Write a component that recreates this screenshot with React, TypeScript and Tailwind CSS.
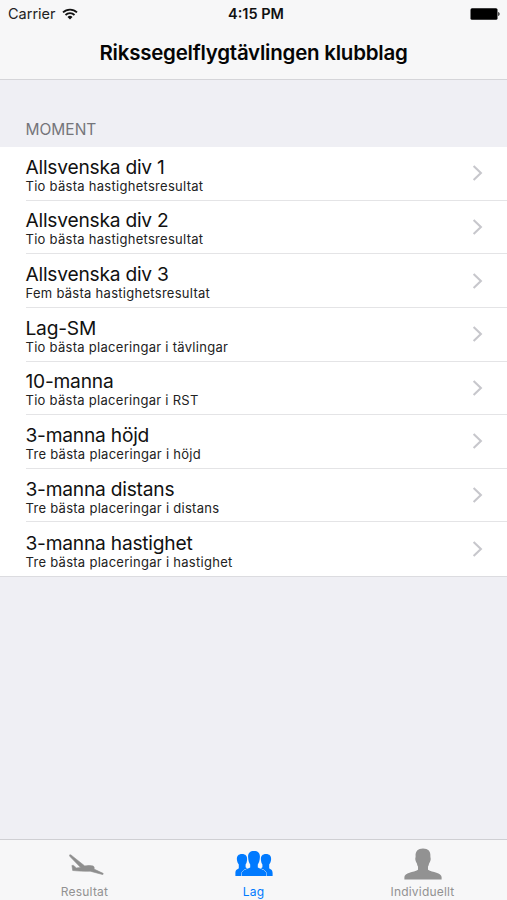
const moments = [
  { title: 'Allsvenska div 1', detail: 'Tio bästa hastighetsresultat' },
  { title: 'Allsvenska div 2', detail: 'Tio bästa hastighetsresultat' },
  { title: 'Allsvenska div 3', detail: 'Fem bästa hastighetsresultat' },
  { title: 'Lag-SM', detail: 'Tio bästa placeringar i tävlingar' },
  { title: '10-manna', detail: 'Tio bästa placeringar i RST' },
  { title: '3-manna höjd', detail: 'Tre bästa placeringar i höjd' },
  { title: '3-manna distans', detail: 'Tre bästa placeringar i distans' },
  { title: '3-manna hastighet', detail: 'Tre bästa placeringar i hastighet' },
];

const WifiIcon = () => (
  <svg width="16" height="12" viewBox="0 0 16 12" fill="none" stroke="#111" strokeWidth="1.8">
    <path d="M1 4.4a10 10 0 0 1 14 0M3.5 7a6.4 6.4 0 0 1 9 0" />
    <path d="M8 11.4 5.5 8.9a3.6 3.6 0 0 1 5 0z" fill="#111" stroke="none" />
  </svg>
)

const BatteryIcon = () => (
  <svg width="31" height="12" viewBox="0 0 31 12" fill="#000">
    <rect x="0.5" y="0.3" width="27" height="11.4" rx="1.5" />
    <path d="M28.3 4c1.6.3 1.6 3.7 0 4z" />
  </svg>
)

const Chevron = () => (
  <svg width="11" height="18" viewBox="0 0 11 18" fill="none" stroke="#c7c7cc" strokeWidth="2.1">
    <path d="M1.6 1.9 8.9 9l-7.3 7.1" />
  </svg>
)

const GliderIcon = () => (
  <svg width="38" height="32" viewBox="0 0 38 32" fill="#8e8e8e" stroke="#8e8e8e" strokeWidth="0.6" strokeLinejoin="round">
    <path d="M3.500 7c.8-.6 1.900.2 3 1.200L18.800 18c2.200-.6 6.300-.8 8.300 0 1.100.6 1.400 2 .9 3.100l9 4.200c.5.400.3 1.300-.5 1.200l-12.300-3.300c-5.300.3-11.500-.1-17.500-.7L5.900 17.400h1.600l2.900 2.500 4.200-.4L4 8.600z" />
  </svg>
)

const GroupIcon = () => (
  <svg width="38" height="32" viewBox="0 0 38 32" fill="#007aff">
    <path d="M7 6c3.600 0 5.400 2.100 5.100 5.600-.2 2.300-.6 3.800-1.500 5v2.600c1.400 1.200 4.400 1.500 4.400 4.200V28H.4v-2.900c0-3.500 2-3.400 3.400-4.800v-3.700c-.9-1.200-1.700-2.700-1.900-5C1.600 8.100 3.400 6 7 6z" />
    <path d="M31 6c-3.600 0-5.400 2.100-5.100 5.600.2 2.300.6 3.800 1.500 5v2.600c-1.400 1.200-4.400 1.500-4.400 4.200V28h14.600v-2.900c0-3.500-2-3.400-3.400-4.800v-3.700c.9-1.200 1.700-2.700 1.900-5C36.400 8.100 34.600 6 31 6z" />
    <path d="M19 3c4.200 0 6.200 2.300 5.900 6.300-.2 3.200-.9 5.500-2.100 7.200v3c2.900 1.800 7.900 2 8.500 6V28H6.700v-2.500c.6-4 5.600-4.200 8.500-6v-3c-1.200-1.700-1.900-4-2.100-7.200C12.800 5.300 14.800 3 19 3z" stroke="#f7f7f8" strokeWidth="0.9" paintOrder="stroke" />
  </svg>
)

const PersonIcon = () => (
  <svg width="38" height="33" viewBox="0 0 38 33" fill="#929292">
    <path d="M19 .5c5.300 0 7.700 3 7.400 7.800-.1 1.300.4 1.700.3 2.900-.2 1.900-.9 2.900-1.500 4-.4 1.600-.7 2.500-1.200 3.300v3.200c4.400 2.700 13.600 3 13.600 7.400v2.500H.4v-2.500c0-4.400 9.200-4.700 13.600-7.400v-3.200c-.5-.8-.8-1.700-1.200-3.300-.6-1.100-1.300-2.100-1.500-4-.1-1.200.4-1.600.3-2.900C11.300 3.500 13.700.5 19 .5z" />
  </svg>
)

const tabs = [
  { label: 'Resultat', icon: <GliderIcon />, color: 'text-[#929292]' },
  { label: 'Lag', icon: <GroupIcon />, color: 'text-[#007aff]' },
  { label: 'Individuellt', icon: <PersonIcon />, color: 'text-[#929292]' },
];

const Row = ({ title, detail }: { title: string; detail: string }) => (
  <li className="flex flex-1 pl-[25.5px] group">
    <div className="flex flex-1 items-center justify-between border-b border-[#e4e4e6] pr-[24px] group-last:border-0">
      <div className="pt-[2px]">
        <p className="text-[19.2px] leading-[24px] tracking-[-0.23px] text-[#111]">{title}</p>
        <p className="text-[13px] leading-[15px] tracking-[0.28px] text-[#222]">{detail}</p>
      </div>
      <Chevron />
    </div>
  </li>
)

export default function App() {
  return (
    <div className="flex h-[900px] w-[507px] flex-col overflow-hidden bg-[#efeff4] font-['Inter',sans-serif]">
      <header className="h-[80px] border-b border-[#d5d5d9] bg-[#f7f7f8]">
        <div className="grid h-[27px] grid-cols-3 items-center pl-[8px] pr-[6px]">
          <div className="flex items-center gap-[6px]">
            <span className="text-[14.5px] text-[#222]">Carrier</span>
            <WifiIcon />
          </div>
          <span className="pl-[3px] text-center text-[14.5px] font-semibold text-[#111]">4:15 PM</span>
          <div className="flex justify-end"><BatteryIcon /></div>
        </div>
        <h1 className="text-center text-[20.5px] font-semibold leading-[51px] tracking-[-0.23px] text-[#050505]">Rikssegelflygtävlingen klubblag</h1>
      </header>
      <main className="flex-1">
        <h2 className="h-[67px] pl-[25.5px] pt-[40px] text-[15.5px] leading-[20px] text-[#75757a]">MOMENT</h2>
        <ul className="flex h-[430px] flex-col border-b border-[#dcdce0] bg-white">
          {moments.map(item => <Row key={item.title} {...item} />)}
        </ul>
      </main>
      <nav className="grid h-[61px] grid-cols-3 border-t border-[#cfcfd3] bg-[#f7f7f8]">
        {tabs.map(tab => (
          <div key={tab.label} className={`flex flex-col items-center ${tab.color}`}>
            <div className="flex h-[44px] items-center pt-[4px]">{tab.icon}</div>
            <span className="text-[12px] leading-[15px] tracking-[0.2px]">{tab.label}</span>
          </div>
        ))}
      </nav>
    </div>
  );
}
